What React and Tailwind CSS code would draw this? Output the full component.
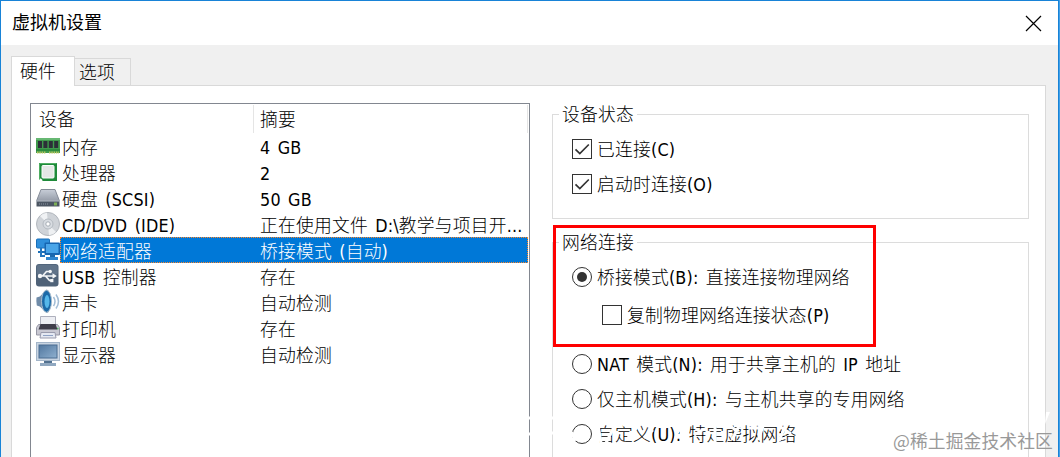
const CJK_UI = "font-['DejaVu_Sans_Condensed','Noto_Sans_CJK_SC_Light','Noto_Sans_CJK_SC',sans-serif]"

function MemoryIcon() {
  return (
    <svg width="24" height="26" viewBox="0 0 24 26">
      <rect x="0" y="5" width="24" height="15" fill="#3f9a4c" />
      <rect x="0" y="5" width="24" height="2" fill="#67b873" />
      {[2, 7.4, 12.8, 18.2].map(x => (
        <rect key={x} x={x} y="8" width="4" height="7" fill="#2c2f38" />
      ))}
      <path d="M1 19.5h9M13 19.5h10" stroke="#b9c65e" strokeWidth="2" strokeDasharray="1.5 0.8" />
      <path d="M0 17h24" stroke="#1d7a30" />
    </svg>
  )
}

function CpuIcon() {
  return (
    <svg width="24" height="26" viewBox="0 0 24 26">
      <path d="M3 4h18v18H6l-3-3z" fill="#1f8a3a" />
      <path d="M3.5 21V4.5h17" fill="none" stroke="#4fae62" />
      <rect x="6" y="6.5" width="12" height="12.5" rx="1" fill="#e4e6e5" stroke="#f8fff9" />
      <path d="M4 20l2 2" stroke="#fff" strokeWidth="2" />
    </svg>
  )
}

function DiskIcon() {
  return (
    <svg width="24" height="26" viewBox="0 0 24 26">
      <defs>
        <linearGradient id="disk" x1="0" y1="0" x2="0" y2="1">
          <stop offset="0" stopColor="#c8ced8" />
          <stop offset="1" stopColor="#959ca8" />
        </linearGradient>
      </defs>
      <path d="M5 4.5h14l4.5 11.5H.5z" fill="url(#disk)" stroke="#848b97" />
      <path d="M.5 16h23v5.5H.5z" fill="#4c5663" />
      <path d="M0 16h24" stroke="#bcc3cd" />
      <path d="M3 19h9" stroke="#76808d" strokeWidth="1.5" strokeDasharray="1 1" />
      <rect x="18" y="17.5" width="3" height="3" fill="#7dae55" />
    </svg>
  )
}

function DiscIcon() {
  return (
    <svg width="24" height="26" viewBox="0 0 24 26">
      <circle cx="12" cy="13" r="11.5" fill="#cfd3d8" stroke="#b2b7bd" />
      <path d="M12 13L4 5a11 11 0 0 1 7-3.3z" fill="#f0f2f4" />
      <path d="M12 13l8 8a11 11 0 0 1-7 3.3z" fill="#eef0f2" />
      <circle cx="12" cy="13" r="5" fill="#d9dde2" stroke="#b4bac1" />
      <circle cx="12" cy="13" r="2.2" fill="#fff" stroke="#a4abb3" />
    </svg>
  )
}

function NetworkIcon() {
  return (
    <svg width="24" height="26" viewBox="0 0 24 26">
      <rect x=".5" y="2" width="13" height="9" rx="1" fill="#2f8fdb" stroke="#1b6fb8" />
      <path d="M2 15h7" stroke="#1b6fb8" strokeWidth="2" />
      <path d="M5 11v8h4" fill="none" stroke="#2476be" strokeWidth="2" />
      <rect x="8.5" y="5.5" width="15.5" height="12.5" rx="1" fill="#1666b2" />
      <rect x="10" y="7" width="12.5" height="9" fill="#4aa5e8" />
      <path d="M14 17.5h5v2.5h-5z" fill="#1c69ad" />
      <path d="M10 21.5h12" stroke="#2f86cf" strokeWidth="3" />
    </svg>
  )
}

function UsbIcon() {
  return (
    <svg width="24" height="26" viewBox="0 0 24 26">
      <rect x="0" y="1" width="22.5" height="22.5" rx="3" fill="#4f6278" />
      <rect x=".8" y="1.8" width="20.9" height="10" rx="2.5" fill="#607389" />
      <g fill="none" stroke="#f4f6f8" strokeWidth="1.7">
        <path d="M3.5 13h14M6.5 13l4-4.5h3M9.5 13l4 4.5h3" />
      </g>
      <circle cx="4" cy="13" r="2.2" fill="#f4f6f8" />
      <path d="M16.5 10.2L20.8 13l-4.3 2.8z" fill="#f4f6f8" />
      <circle cx="14.2" cy="8.5" r="1.7" fill="#f4f6f8" />
      <rect x="14.2" y="16" width="3.2" height="3.2" fill="#f4f6f8" />
    </svg>
  )
}

function SoundIcon() {
  return (
    <svg width="24" height="26" viewBox="0 0 24 26">
      <path d="M.5 8.5Q0 12 .8 16.5l3 1 7 6.5 2-1V2l-2-1.5-7 7z" fill="#6f8ba8" />
      <ellipse cx="10.5" cy="12.3" rx="5" ry="11" fill="#1c6aa8" stroke="#a7bccd" />
      <ellipse cx="11" cy="12.5" rx="2.5" ry="6.5" fill="#56b7e9" />
      <path d="M17.5 8q3 4.5 0 9M20 5.5q5 7 0 14" fill="none" stroke="#a3bdd6" strokeWidth="1.5" />
    </svg>
  )
}

function PrinterIcon() {
  return (
    <svg width="24" height="26" viewBox="0 0 24 26">
      <path d="M4.5 1.5h15V12h-15z" fill="#edeef3" stroke="#aeb0bd" />
      <path d="M2.5 9.5h19l2 3v7.5H.5v-7.5z" fill="#c8c8d2" stroke="#9697a5" />
      <path d="M4.5 9h15l2 5.5h-19z" fill="#3f3d4a" />
      <path d="M5 17.5h14l1 5.5H4z" fill="#e5e9f2" stroke="#9a9cae" />
      <path d="M7 20.5h10" stroke="#8fa2c4" />
      <path d="M21 13.5h1.5" stroke="#4bb461" strokeWidth="1.5" />
    </svg>
  )
}

function DisplayIcon() {
  return (
    <svg width="24" height="26" viewBox="0 0 24 26">
      <defs>
        <linearGradient id="screen" x1="0" y1="0" x2="1" y2="1">
          <stop offset="0" stopColor="#51779f" />
          <stop offset="1" stopColor="#8fb0cf" />
        </linearGradient>
      </defs>
      <rect x=".5" y="1.5" width="23" height="18" fill="#c9d5e2" stroke="#a3b5c9" />
      <rect x="3" y="4" width="18" height="13" fill="url(#screen)" stroke="#4b6c91" />
      <path d="M8 20h8v2H8z" fill="#52718f" />
      <path d="M4 22h16v3H4z" fill="#90a8c0" />
    </svg>
  )
}

const DEVICES = [
  { icon: MemoryIcon, name: '内存', summary: '4 GB' },
  { icon: CpuIcon, name: '处理器', summary: '2' },
  { icon: DiskIcon, name: '硬盘 (SCSI)', summary: '50 GB' },
  { icon: DiscIcon, name: 'CD/DVD (IDE)', summary: '正在使用文件 D:\\教学与项目开...' },
  { icon: NetworkIcon, name: '网络适配器', summary: '桥接模式 (自动)', selected: true },
  { icon: UsbIcon, name: 'USB 控制器', summary: '存在' },
  { icon: SoundIcon, name: '声卡', summary: '自动检测' },
  { icon: PrinterIcon, name: '打印机', summary: '存在' },
  { icon: DisplayIcon, name: '显示器', summary: '自动检测' },
]

function DeviceRow({ device }) {
  const Icon = device.icon
  return (
    <div className="flex h-[26px] pl-[5px] pr-px">
      <Icon />
      <div
        className={`flex flex-1 items-center whitespace-nowrap border border-dotted pt-[3px] leading-[21px] ${
          device.selected ? 'border-[#ff8728] bg-[#0078d7] text-white' : 'border-transparent'
        }`}
      >
        <span className="w-[199px] pl-px">{device.name}</span>
        <span>{device.summary}</span>
      </div>
    </div>
  )
}

function Check({ checked, label }) {
  return (
    <label className="flex h-5 items-center gap-[5px] whitespace-nowrap">
      <span className="h-5 w-5 shrink-0 border border-[#333] bg-white">
        {checked && (
          <svg width="18" height="18" viewBox="0 0 18 18">
            <path d="M2.5 9.3l4.3 4.2 9-9" fill="none" stroke="#333" strokeWidth="1.7" />
          </svg>
        )}
      </span>
      <span className="pt-[3px]">{label}</span>
    </label>
  )
}

function Radio({ checked, label }) {
  return (
    <label className="flex h-5 items-center gap-[5px] whitespace-nowrap">
      <span className="flex h-5 w-5 shrink-0 items-center justify-center rounded-full border border-[#333] bg-white">
        {checked && <span className="h-[10px] w-[10px] rounded-full bg-[#333]" />}
      </span>
      <span className="pt-[3px]">{label}</span>
    </label>
  )
}

export default function App() {
  return (
    <div className={`relative flex h-[457px] w-[1060px] overflow-hidden bg-[#42a0e8] text-[17.8px] font-light tracking-[0.2px] text-black [word-spacing:2px] ${CJK_UI}`}>
      <div className="flex w-[1059px] flex-col border-x border-t border-[#1883d7] bg-[#f0f0f0]">
        {/* Title bar */}
        <div className="flex h-11 shrink-0 items-center justify-between bg-white pl-[11px] pr-4">
          <span className="pb-[3px] font-['Noto_Sans_CJK_SC',sans-serif] text-[18px] font-normal tracking-normal">虚拟机设置</span>
          <svg width="17" height="17" viewBox="0 0 17 17">
            <path d="M1 1l15 15M16 1L1 16" stroke="#000" strokeWidth="1.2" />
          </svg>
        </div>

        {/* Tabs */}
        <div className="mt-[11px] flex h-[29px] shrink-0 items-end pl-[10px]">
          <div className="z-10 -mb-px h-[30px] w-16 border border-b-0 border-[#d9d9d9] bg-white pl-2 leading-[29px]">硬件</div>
          <div className="h-[27px] w-14 border border-b-0 border-l-0 border-[#d9d9d9] pl-1 leading-[28px]">选项</div>
        </div>

        <div className="ml-[10px] flex h-[372px] w-[1035px] shrink-0 border border-b-0 border-[#d9d9d9] bg-white pl-[18px] pt-[17px]">
          {/* Device list */}
          <div className="h-[360px] w-[500px] shrink-0 border border-b-0 border-[#828790]">
            <div className="mr-px mt-px flex h-7 border-r border-[#e5e5e5] leading-[30px]">
              <span className="w-[223px] border-r border-[#e5e5e5] pl-2">设备</span>
              <span className="pl-[6px]">摘要</span>
            </div>
            {DEVICES.map(d => <DeviceRow key={d.name} device={d} />)}
          </div>

          {/* Device options */}
          <div className="ml-[22px] w-[477px]">
            <fieldset className="-mt-[2px] h-[118px] border border-[#dcdcdc] pl-[19px]">
              <legend className="-ml-[13px] h-[26px] px-[3px] leading-[28px]">设备状态</legend>
              <div className="flex flex-col gap-[15px] pt-[12px]">
                <Check checked label="已连接(C)" />
                <Check checked label="启动时连接(O)" />
              </div>
            </fieldset>
            <fieldset className="mt-[10px] h-[250px] border border-[#dcdcdc] pl-[19px]">
              <legend className="-ml-[13px] h-[26px] px-[3px] leading-[28px]">网络连接</legend>
              <div className="flex flex-col pt-[12px]">
                <Radio checked label="桥接模式(B): 直接连接物理网络" />
                <div className="mb-[29px] ml-[30px] mt-[18px]">
                  <Check label="复制物理网络连接状态(P)" />
                </div>
                <div className="flex flex-col gap-[15px]">
                  <Radio label="NAT 模式(N): 用于共享主机的 IP 地址" />
                  <Radio label="仅主机模式(H): 与主机共享的专用网络" />
                  <Radio label="自定义(U): 特定虚拟网络" />
                </div>
              </div>
            </fieldset>
          </div>
        </div>
      </div>

      {/* Highlight around the bridged mode options */}
      <div className="absolute left-[553px] top-[225px] z-20 h-[122px] w-[323px] border-[3px] border-[#fe0000]" />

      {/* White strokes of the faded mark */}
      <svg className="absolute left-[520px] top-[405px] z-20" width="540" height="52" viewBox="0 0 540 52">
        <g fill="none" stroke="#fff" strokeWidth="3">
          <path d="M5 13h10M5 29h10M29 13h8M29 28h8M50 22l9-8M55 36l-3-9M67 14l-7-4M77 14l4 24M84 14h14l-12 24M103 20h10M108 33l10-12M122 12l10 8M133 25l-9 8M151 12l-7 12M162 14l-7 21" />
          <path d="M172 18h14M174 30l10-6M195 13v26M203 17l13 8M222 15l-10 20M229 23h14M246 13l-8 22M256 19l15 10M269 12l-10 24" />
        </g>
        <path d="M526 7h4l-5 12z" fill="#fff" />
      </svg>

      <div className="absolute left-[893px] top-[427px] z-30 whitespace-nowrap font-['Noto_Sans_CJK_SC',sans-serif] text-[17.8px] font-normal leading-[26px] tracking-[0.1px] text-[#999]">
        @稀土掘金技术社区
      </div>
    </div>
  )
}
